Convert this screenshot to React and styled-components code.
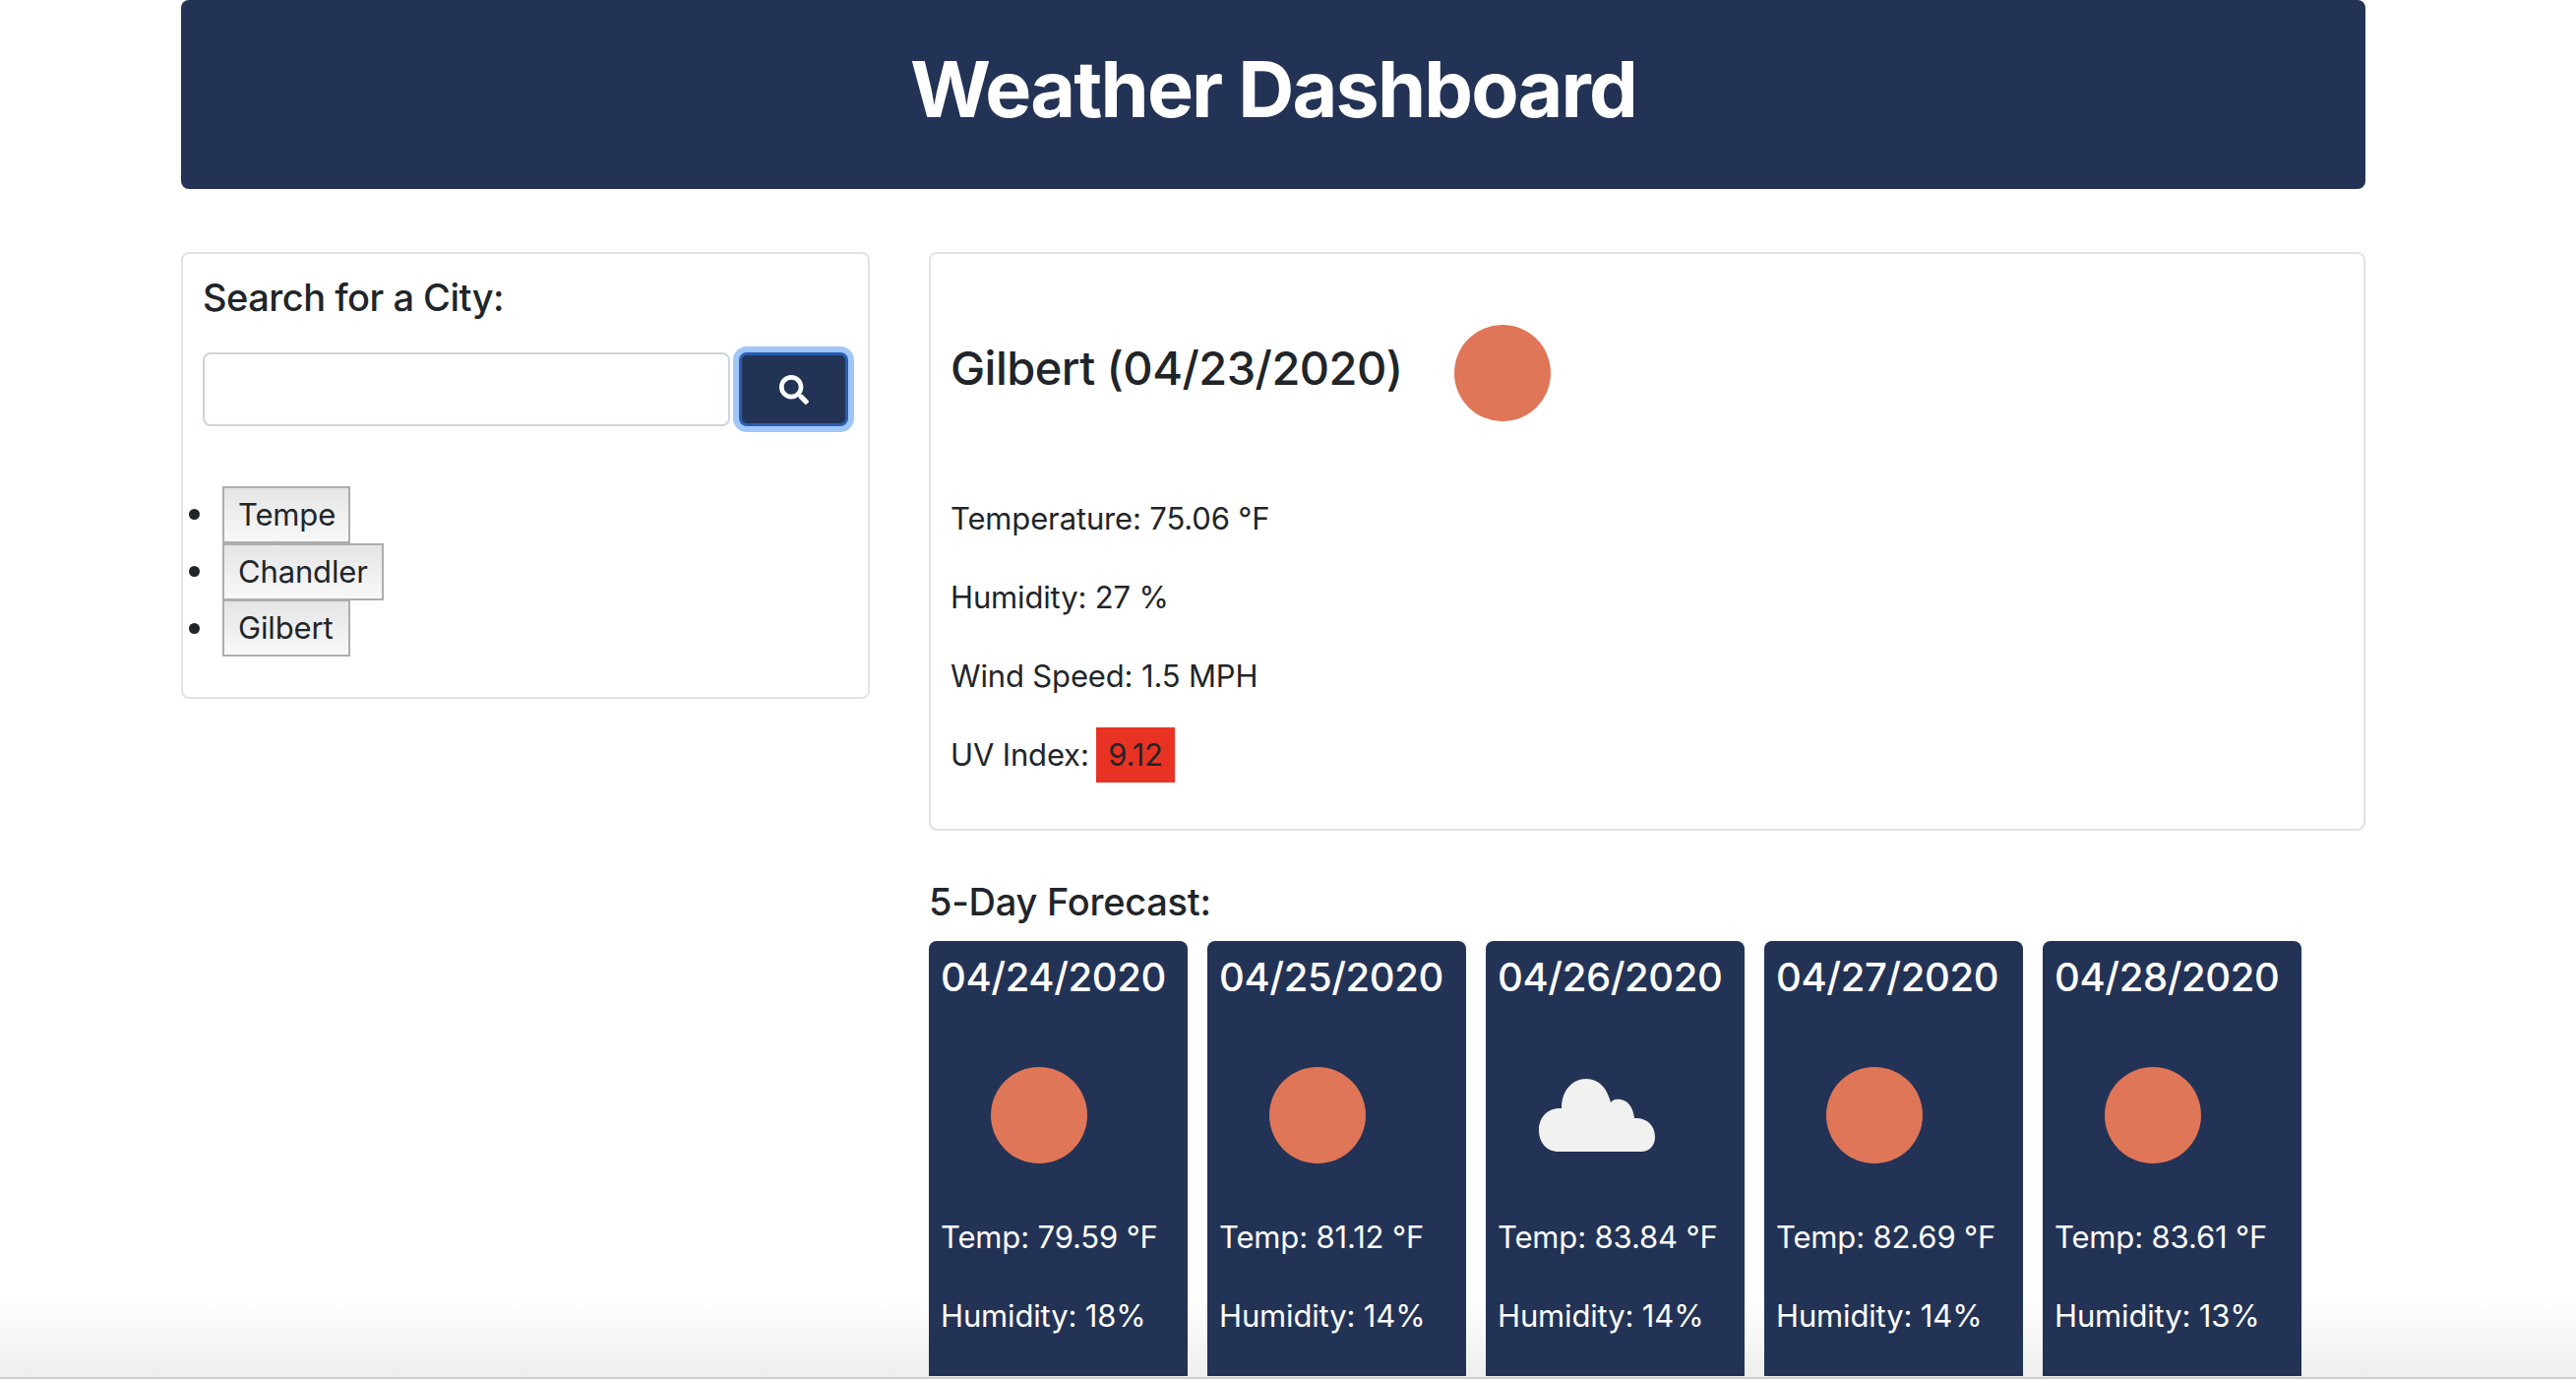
import React from "react";
import styled, { createGlobalStyle } from "styled-components";
import { FaSearch } from "react-icons/fa";

const Global = createGlobalStyle`
  html, body { margin: 0; padding: 0; background: #fff; }
  * { box-sizing: border-box; }
`;

const Screen = styled.div`
  height: 1402px;
  overflow: hidden;
  font-family: Inter, "Liberation Sans", sans-serif;
  font-size: 31px;
  line-height: 48px;
  letter-spacing: -0.15px;
  color: #212529;
  background:
    linear-gradient(#cfcfcf, #cfcfcf) 0 1399px / 100% 2px no-repeat,
    linear-gradient(#fff 0, #fff 1318px, #eeeeee 1399px, #fff 1399px);
`;

const Page = styled.div`
  width: 2220px;
  margin-left: 184px;
`;

const Banner = styled.header`
  height: 192px;
  padding-bottom: 12px;
  background: #233356;
  border-radius: 8px;
  display: flex;
  align-items: center;
  justify-content: center;
`;

const BannerTitle = styled.h1`
  margin: 0;
  color: #fff;
  font-size: 79px;
  line-height: 1;
  font-weight: 700;
  letter-spacing: -1.85px;
`;

const Columns = styled.div`
  display: grid;
  grid-template-columns: 700px 1460px;
  gap: 60px;
  margin-top: 64px;
  align-items: start;
`;

const Card = styled.section`
  border: 2px solid #e2e2e2;
  border-radius: 8px;
  padding: 0 20px;
  background: #fff;
`;

const SearchTitle = styled.h2`
  margin: 21px 0 0;
  font-size: 38px;
  line-height: 46px;
  font-weight: 500;
  letter-spacing: -0.5px;
`;

const SearchRow = styled.div`
  display: flex;
  gap: 9px;
  margin-top: 33px;
`;

const SearchInput = styled.input`
  width: 538px;
  height: 75px;
  border: 2px solid #ced4da;
  border-radius: 8px;
  background: #fff;
`;

const SearchButton = styled.button`
  width: 111px;
  height: 75px;
  border: 3px solid #2a5db0;
  border-radius: 8px;
  background: #233356;
  color: #fff;
  box-shadow: 0 0 0 6px #a1c6fa;
  display: flex;
  align-items: center;
  justify-content: center;
  padding: 0;
  font-size: 30px;
`;

const CityList = styled.ul`
  margin: 61px 0 41px -14px;
  padding: 0;
  list-style: none;
`;

const CityItem = styled.li`
  height: 57.7px;
  display: flex;
  align-items: center;

  &::before {
    content: "";
    width: 11px;
    height: 11px;
    margin-right: 23px;
    border-radius: 50%;
    background: #212529;
  }
`;

const CityButton = styled.button`
  height: 58px;
  width: ${(p) => p.$width}px;
  padding: 0 0 0 14px;
  border: 2px solid #adadad;
  border-radius: 0;
  background: linear-gradient(#e5e5e5, #f8f8f8);
  color: #212529;
  font: inherit;
  letter-spacing: inherit;
  text-align: left;
`;

const TodayRow = styled.div`
  display: flex;
  align-items: center;
  margin-top: 21px;
`;

const TodayTitle = styled.h2`
  margin: 0 1px 10px 0;
  font-size: 47px;
  line-height: 56px;
  font-weight: 500;
  letter-spacing: -0.55px;
`;

const Stat = styled.p`
  margin: 0 0 32px;
`;

const StatList = styled.div`
  margin-top: 24px;
  padding-bottom: 51px;
  & > p:last-child { margin-bottom: 0; }
`;

const UvBadge = styled.span`
  display: inline-block;
  background: #e83324;
  padding: 0 12px;
  height: 56px;
  line-height: 56px;
  margin: -4px 0 -4px -1px;
`;

const ForecastTitle = styled.h3`
  margin: 49px 0 0;
  font-size: 38px;
  line-height: 46px;
  font-weight: 500;
  letter-spacing: -0.25px;
`;

const ForecastRow = styled.div`
  display: flex;
  gap: 20px;
  margin-top: 17px;
`;

const DayCard = styled.article`
  width: 263px;
  flex: none;
  height: 442px;
  padding: 8px 12px 0;
  border-radius: 8px 8px 0 0;
  background: #233356;
  color: #fff;
  overflow: hidden;
`;

const DayDate = styled.h4`
  margin: 0;
  font-size: 40px;
  line-height: 57px;
  font-weight: 500;
  letter-spacing: -0.4px;
`;

const DayStat = styled.p`
  margin: 0 0 32px;
  white-space: nowrap;
`;

const WeatherIcon = styled.svg`
  display: block;
  width: 200px;
  height: 200px;
  flex: none;
  margin: ${(p) => (p.$spaced ? "12px 0 0" : "0")};
`;

function Sun({ spaced }) {
  return (
    <WeatherIcon $spaced={spaced} viewBox="0 0 200 200">
      <circle cx="100" cy="100" r="49" fill="#df7657" />
    </WeatherIcon>
  );
}

function Cloud({ spaced }) {
  return (
    <WeatherIcon $spaced={spaced} viewBox="0 0 200 200">
      <path
        fill="#f1f1ef"
        d="M62 137 C50 137 42 128 42 115 C42 103 50 93 63 93 L65 93 C65 75 76 63 90 63 C103 63 111 72 115 87 C117 84 121 83 125 84 C133 85 138 93 139 103 C151 102 160 110 160 122 C160 131 154 137 146 137 Z"
      />
    </WeatherIcon>
  );
}

const cities = [
  { name: "Tempe", width: 130 },
  { name: "Chandler", width: 164 },
  { name: "Gilbert", width: 130 },
];

const days = [
  { date: "04/24/2020", temp: "79.59", hum: "18%", icon: "sun" },
  { date: "04/25/2020", temp: "81.12", hum: "14%", icon: "sun" },
  { date: "04/26/2020", temp: "83.84", hum: "14%", icon: "cloud" },
  { date: "04/27/2020", temp: "82.69", hum: "14%", icon: "sun" },
  { date: "04/28/2020", temp: "83.61", hum: "13%", icon: "sun" },
];

export default function App() {
  return (
    <Screen>
      <Global />
      <Page>
        <Banner>
          <BannerTitle>Weather Dashboard</BannerTitle>
        </Banner>
        <Columns>
          <Card>
            <SearchTitle>Search for a City:</SearchTitle>
            <SearchRow>
              <SearchInput type="text" />
              <SearchButton aria-label="Search">
                <FaSearch />
              </SearchButton>
            </SearchRow>
            <CityList>
              {cities.map((c) => (
                <CityItem key={c.name}>
                  <CityButton $width={c.width}>{c.name}</CityButton>
                </CityItem>
              ))}
            </CityList>
          </Card>
          <div>
            <Card>
              <TodayRow>
                <TodayTitle>Gilbert (04/23/2020)</TodayTitle>
                <Sun />
              </TodayRow>
              <StatList>
                <Stat>Temperature: 75.06 °F</Stat>
                <Stat>Humidity: 27 %</Stat>
                <Stat>Wind Speed: 1.5 MPH</Stat>
                <Stat>UV Index: <UvBadge>9.12</UvBadge></Stat>
              </StatList>
            </Card>
            <ForecastTitle>5-Day Forecast:</ForecastTitle>
            <ForecastRow>
              {days.map((d) => (
                <DayCard key={d.date}>
                  <DayDate>{d.date}</DayDate>
                  {d.icon === "sun" ? <Sun spaced /> : <Cloud spaced />}
                  <DayStat>Temp: {d.temp} °F</DayStat>
                  <DayStat>Humidity: {d.hum}</DayStat>
                </DayCard>
              ))}
            </ForecastRow>
          </div>
        </Columns>
      </Page>
    </Screen>
  );
}
